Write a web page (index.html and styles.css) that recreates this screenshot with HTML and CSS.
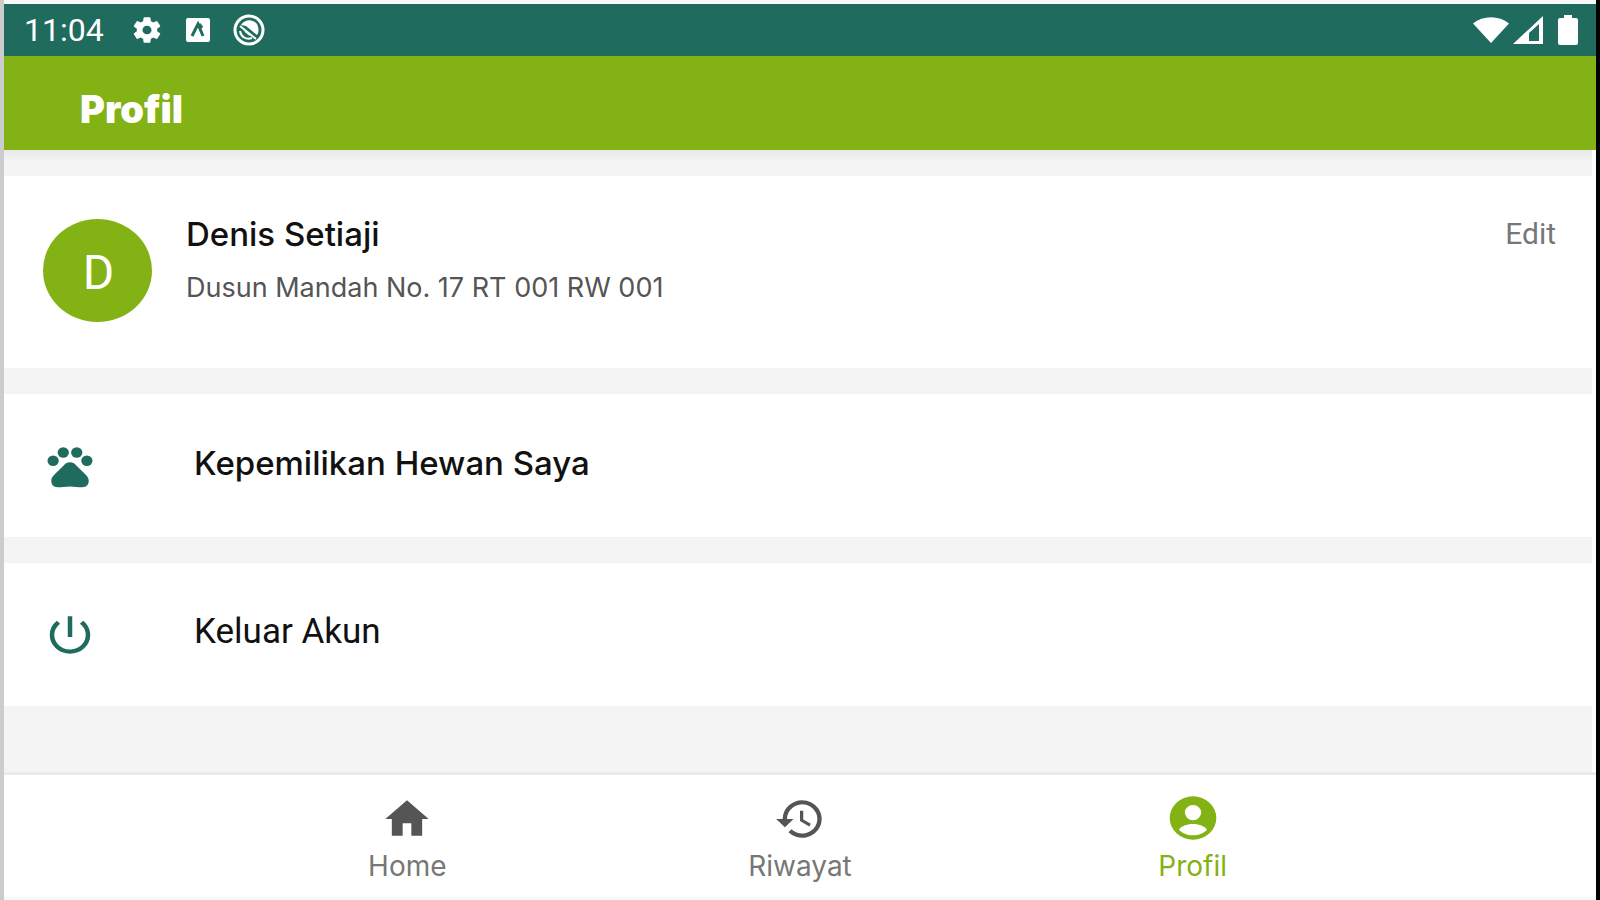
FILE: index.html
```html
<!DOCTYPE html>
<html lang="id">
<head>
  <meta charset="UTF-8">
  <meta name="viewport" content="width=device-width, initial-scale=1.0">
  <title>Profil</title>
  <link rel="stylesheet" href="styles.css">
</head>
<body>
  <div class="screen">

    <!-- Status Bar -->
    <div class="status-bar">
      <span class="time">11:04</span>
      <div class="status-icons">
        <svg width="34" height="32" viewBox="0 0 24 24" preserveAspectRatio="none" fill="currentColor"><path d="M19.14 12.94c.04-.3.06-.61.06-.94s-.02-.64-.07-.94l2.03-1.58a.49.49 0 0 0 .12-.61l-1.92-3.32a.49.49 0 0 0-.59-.22l-2.39.96a7 7 0 0 0-1.62-.94l-.36-2.54a.48.48 0 0 0-.48-.41h-3.84a.47.47 0 0 0-.47.41l-.36 2.54c-.59.24-1.13.57-1.62.94l-2.39-.96a.48.48 0 0 0-.59.22L2.74 8.87a.48.48 0 0 0 .12.61l2.03 1.58c-.05.3-.09.63-.09.94s.02.64.07.94l-2.03 1.58a.49.49 0 0 0-.12.61l1.92 3.32c.12.22.37.29.59.22l2.39-.96c.5.38 1.03.7 1.62.94l.36 2.54c.05.24.24.41.48.41h3.84c.24 0 .44-.17.47-.41l.36-2.54a7 7 0 0 0 1.62-.94l2.39.96c.22.08.47 0 .59-.22l1.92-3.32a.47.47 0 0 0-.12-.61zM12 15.2a3.2 3.2 0 1 1 0-6.4 3.2 3.2 0 0 1 0 6.4z"/></svg>
        <svg width="24" height="24" viewBox="0 0 24 24"><rect width="24" height="24" rx="2" fill="currentColor"/><path class="cut-line" d="M6 18l6-12 5 12M13 6l3 4"/></svg>
        <svg width="34" height="34" viewBox="0 0 34 34"><circle cx="17" cy="17" r="14" fill="none" stroke="currentColor" stroke-width="3"/><path fill="currentColor" d="M9 12c4-6 12-6 16-1 2 4 2 8 0 11L14 13z"/><path d="M8 13l16 13M8 18c1 6 6 9 12 7M13 18l5 4" fill="none" stroke="currentColor" stroke-width="2"/></svg>
      </div>
      <div class="signal-icons">
        <svg width="36" height="28" viewBox="0 0 36 30" preserveAspectRatio="none" fill="currentColor"><path d="M0 8C10-1 26-1 36 8L18 29z"/></svg>
        <svg width="31" height="30" viewBox="0 0 31 30"><path fill="currentColor" fill-rule="evenodd" d="M0 29L30 1v28zM26 9L16 18v8h10z"/></svg>
        <svg width="20" height="30" viewBox="0 0 20 30" fill="currentColor"><path d="M6 0h8v3h4q2 0 2 2v23q0 2-2 2H2q-2 0-2-2V5q0-2 2-2h4z"/></svg>
      </div>
    </div>

    <header class="app-bar">
      <h1>Profil</h1>
    </header>

    <main class="content">
      <!-- User Section -->
      <section class="card user-card">
        <div class="avatar">D</div>
        <div class="user-info">
          <h2>Denis Setiaji</h2>
          <p>Dusun Mandah No. 17 RT 001 RW 001</p>
        </div>
        <a class="edit-link" href="#">Edit</a>
      </section>

      <!-- Menu Section -->
      <a class="card menu-item" href="#">
        <svg width="54" height="50" viewBox="0 0 24 24" preserveAspectRatio="none" fill="currentColor"><circle cx="4.500" cy="9.500" r="2.500"/><circle cx="9" cy="5.500" r="2.500"/><circle cx="15" cy="5.500" r="2.500"/><circle cx="19.500" cy="9.500" r="2.500"/><path d="M12 10.200c-1.200 0-2 .6-2.800 1.500l-4 4.300c-1.200 1.300-1.700 2.300-1.500 3.700.2 1.500 1.200 2.500 2.800 2.500 1.800 0 3.500-.4 5.500-.4s3.700.4 5.500.4c1.600 0 2.600-1 2.800-2.500.2-1.400-.3-2.400-1.500-3.700l-4-4.300c-.8-.9-1.600-1.500-2.800-1.500z"/></svg>
        <span>Kepemilikan Hewan Saya</span>
      </a>
      <a class="card menu-item logout" href="#">
        <svg width="54" height="50" viewBox="0 0 24 24" preserveAspectRatio="none" fill="currentColor"><path d="M13 3h-2v10h2zm4.830 2.170l-1.420 1.420A6.920 6.920 0 0 1 19 12a7 7 0 1 1-11.420-5.420L6.170 5.170A8.930 8.930 0 0 0 3 12a9 9 0 0 0 18 0c0-2.740-1.230-5.180-3.170-6.830z"/></svg>
        <span>Keluar Akun</span>
      </a>
    </main>

    <!-- Bottom Navigation -->
    <nav class="bottom-nav">
      <a href="#">
        <svg width="52" height="50" viewBox="0 0 24 24" preserveAspectRatio="none" fill="currentColor"><path d="M10 20v-6h4v6h5v-8h3L12 3 2 12h3v8z"/></svg>
        <span>Home</span>
      </a>
      <a href="#">
        <svg width="52" height="50" viewBox="0 0 24 24" preserveAspectRatio="none" fill="currentColor"><path d="M13 3a9 9 0 0 0-9 9H1l3.890 3.890.07.14L9 12H6a7 7 0 1 1 2.060 4.940l-1.420 1.420A9 9 0 1 0 13 3zm-1 5v5l4.280 2.540.72-1.210-3.500-2.080V8z"/></svg>
        <span>Riwayat</span>
      </a>
      <a class="active" href="#">
        <svg width="56" height="52" viewBox="0 0 24 24" preserveAspectRatio="none" fill="currentColor"><path d="M12 2a10 10 0 1 0 0 20 10 10 0 0 0 0-20zm0 4a3.500 3.500 0 1 1 0 7 3.500 3.500 0 0 1 0-7zm0 14c-2.500 0-4.700-1-6-2.600 1-1.800 4-2.600 6-2.600s5 .8 6 2.600C16.700 19 14.500 20 12 20z"/></svg>
        <span>Profil</span>
      </a>
    </nav>

  </div>
</body>
</html>
```
FILE: styles.css
```css
* {
  box-sizing: border-box;
}
body {
  margin: 0;
  font-family: Inter, sans-serif;
  color: #111111;
  background-color: #f8f8f8;
}
h1, h2, p {
  margin: 0;
}
a {
  color: inherit;
  text-decoration: none;
}
svg {
  display: block;
  flex-shrink: 0;
}
.screen {
  display: flex;
  flex-direction: column;
  min-height: 100vh;
  padding: 4px 0 3px;
  border-left: 4px solid #cccccc;
  border-right: 4px solid #000000;
}
.status-bar {
  display: flex;
  align-items: center;
  height: 52px;
  padding: 0 18px 0 20px;
  background-color: #1f6b5e;
  color: #ffffff;
}
.time {
  font-family: Roboto, sans-serif;
  font-size: 32px;
}
.status-icons {
  display: flex;
  align-items: center;
  gap: 22px;
  margin-left: 26px;
}
.cut-line {
  fill: none;
  stroke: #1f6b5e;
  stroke-width: 3;
}
.signal-icons {
  display: flex;
  align-items: center;
  gap: 4px;
  margin-left: auto;
}
.signal-icons svg:last-child {
  margin-left: 10px;
}
.app-bar {
  display: flex;
  align-items: center;
  height: 94px;
  padding: 12px 76px 0;
  background-color: #83b214;
  color: #ffffff;
}
.app-bar h1 {
  font-size: 38px;
  font-weight: 900;
}
.content {
  flex: 1;
  display: flex;
  flex-direction: column;
  gap: 26px;
  padding: 26px 0;
  background: linear-gradient(#e9e9e9, #f4f4f4 12px);
  border-right: 4px solid #ffffff;
}
.card {
  background-color: #ffffff;
}
.user-card {
  display: flex;
  align-items: flex-start;
  min-height: 192px;
  padding: 40px 36px 0 39px;
}
.avatar {
  display: flex;
  align-items: center;
  justify-content: center;
  width: 109px;
  height: 103px;
  margin-top: 3px;
  padding: 4px 0 0 2px;
  border-radius: 50%;
  background-color: #83b214;
  color: #ffffff;
  font-family: Roboto, sans-serif;
  font-size: 48px;
}
.user-info {
  flex: 1;
  padding-left: 34px;
}
.user-info h2 {
  font-size: 33px;
  font-weight: 500;
  line-height: 36px;
}
.user-info p {
  margin-top: 20px;
  font-size: 27px;
  line-height: 32px;
  color: #555555;
}
.edit-link {
  font-family: Roboto, sans-serif;
  font-size: 30px;
  line-height: 36px;
  color: #777777;
}
.menu-item {
  display: flex;
  align-items: center;
  gap: 97px;
  min-height: 143px;
  padding: 0 39px;
}
.menu-item svg {
  color: #1f6b5e;
}
.menu-item span {
  padding-bottom: 6px;
  font-size: 33px;
  font-weight: 500;
}
.logout span {
  font-family: Roboto, sans-serif;
  font-size: 35px;
  font-weight: 400;
}
.bottom-nav {
  display: flex;
  height: 125px;
  padding: 0 13%;
  border-top: 3px solid #eaeaea;
  background-color: #ffffff;
}
.bottom-nav a {
  flex: 1;
  display: flex;
  flex-direction: column;
  align-items: center;
  justify-content: flex-end;
  padding-bottom: 15px;
  color: #777777;
  font-size: 28px;
  line-height: 32px;
}
.bottom-nav svg {
  margin-bottom: 6px;
  color: #555555;
}
.bottom-nav .active, .bottom-nav .active svg {
  color: #83b214;
}
```
